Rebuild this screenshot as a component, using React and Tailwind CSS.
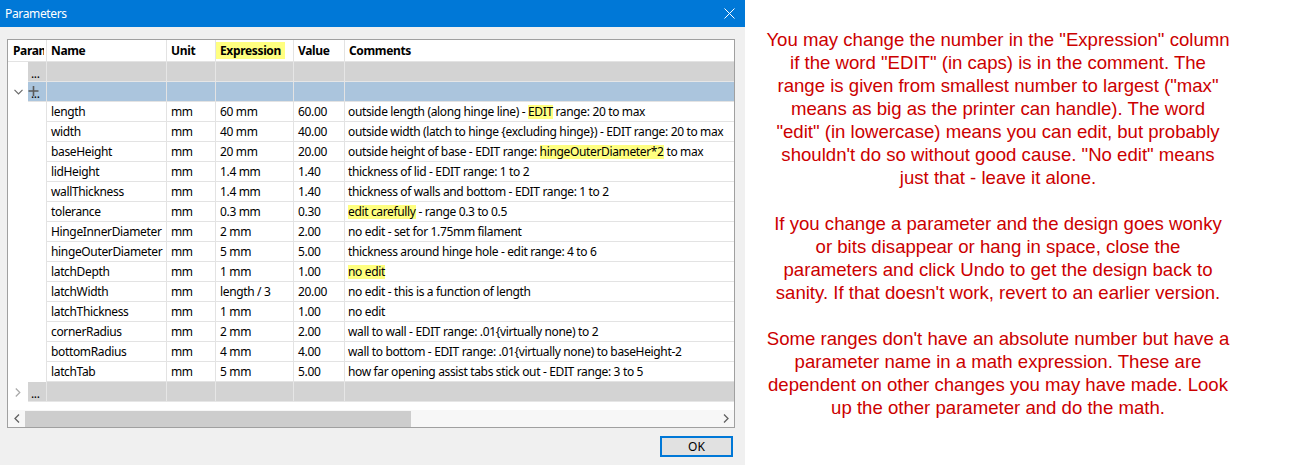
import React from "react";
import clsx from "clsx";

const hl = (t) => (
  <span className="bg-[#ffff80] leading-[14px] inline-block">{t}</span>
);

const rows = [
  ["length", "mm", "60 mm", "60.00", <>outside length (along hinge line) - {hl("EDIT")} range: 20 to max</>],
  ["width", "mm", "40 mm", "40.00", "outside width (latch to hinge {excluding hinge}) - EDIT range: 20 to max"],
  ["baseHeight", "mm", "20 mm", "20.00", <>outside height of base - EDIT range: {hl("hingeOuterDiameter*2")} to max</>],
  ["lidHeight", "mm", "1.4 mm", "1.40", "thickness of lid - EDIT range: 1 to 2"],
  ["wallThickness", "mm", "1.4 mm", "1.40", "thickness of walls and bottom - EDIT range: 1 to 2"],
  ["tolerance", "mm", "0.3 mm", "0.30", <>{hl("edit carefully")} - range 0.3 to 0.5</>],
  ["HingeInnerDiameter", "mm", "2 mm", "2.00", "no edit - set for 1.75mm filament"],
  ["hingeOuterDiameter", "mm", "5 mm", "5.00", "thickness around hinge hole - edit range: 4 to 6"],
  ["latchDepth", "mm", "1 mm", "1.00", hl("no edit")],
  ["latchWidth", "mm", "length / 3", "20.00", "no edit - this is a function of length"],
  ["latchThickness", "mm", "1 mm", "1.00", "no edit"],
  ["cornerRadius", "mm", "2 mm", "2.00", "wall to wall - EDIT range: .01{virtually none) to 2"],
  ["bottomRadius", "mm", "4 mm", "4.00", "wall to bottom - EDIT range: .01{virtually none) to baseHeight-2"],
  ["latchTab", "mm", "5 mm", "5.00", "how far opening assist tabs stick out - EDIT range: 3 to 5"],
];

const notes = [
  [
    'You may change the number in the "Expression" column',
    'if the word "EDIT" (in caps) is in the comment. The',
    'range is given from smallest number to largest ("max"',
    "means as big as the printer can handle). The word",
    '"edit" (in lowercase) means you can edit, but probably',
    "shouldn't do so without good cause. \"No edit\" means",
    "just that - leave it alone.",
  ],
  [
    "If you change a parameter and the design goes wonky",
    "or bits disappear or hang in space, close the",
    "parameters and click Undo to get the design back to",
    "sanity. If that doesn't work, revert to an earlier version.",
  ],
  [
    "Some ranges don't have an absolute number but have a",
    "parameter name in a math expression. These are",
    "dependent on other changes you may have made. Look",
    "up the other parameter and do the math.",
  ],
];

const colW = ["w-[120px]", "w-[49px]", "w-[78px]", "w-[51px]", "flex-1"];

const cell = "shrink-0 h-full border-r border-b border-[#e3e3e3] flex items-center overflow-hidden whitespace-nowrap";

const GroupRow = ({ blue, expander }) => (
  <div className="flex h-[20px]">
    <div className="w-[20px] shrink-0 flex items-center justify-center text-[#7a7a7a]">
      {expander}
    </div>
    <div
      className={clsx(
        "flex flex-1 h-full",
        blue ? "bg-[#abc5dd]" : "bg-[#d3d3d3]",
      )}
    >
      <div className={clsx(cell, "w-[19px] pl-[3px] items-end pb-[2px] relative", blue ? "border-[#c5d6e6]" : "border-[#e6e6e6]")}>
        <span className="leading-[10px]">...</span>
        {blue && (
          <svg className="absolute left-[0px] top-[3px]" width="11" height="12" viewBox="0 0 11 12">
            <path d="M5.5 1v10M0.5 6h10" stroke="#5a5a5a" strokeWidth="1.6" />
          </svg>
        )}
      </div>
      {colW.map((w, i) => (
        <div key={i} className={clsx(cell, w, blue ? "border-[#c5d6e6]" : "border-[#e6e6e6]", i === 4 && "border-r-0")} />
      ))}
    </div>
  </div>
);

export default function App() {
  return (
    <div className="flex w-[1294px] h-[465px] bg-white">
      {/* Dialog */}
      <div className="w-[745px] h-full bg-[#f0f0f0] flex flex-col font-['Noto_Sans',sans-serif] text-[12px] tracking-[-0.35px] text-black">
        <div className="h-[27px] bg-[#0078d7] flex items-center justify-between pl-[5px] pr-[10px]">
          <span className="text-white">Parameters</span>
          <svg width="11" height="11" viewBox="0 0 11 11">
            <path d="M0.5 0.5l10 10M10.5 0.5l-10 10" stroke="#fff" strokeWidth="1" />
          </svg>
        </div>

        <div className="mt-[12px] ml-[7px] w-[728px] h-[389px] border border-[#a0a0a0] bg-white flex flex-col">
          {/* header */}
          <div className="flex h-[22px] font-bold">
            <div className={clsx(cell, "w-[39px] pl-[5px]")}>
              <span className="w-[31px] overflow-hidden">Parameter</span>
            </div>
            {["Name", "Unit", "Expression", "Value", "Comments"].map((h, i) => (
              <div key={h} className={clsx(cell, colW[i], i === 4 && "border-r-0", i === 2 ? "pl-0" : "pl-[4px]")}>
                {i === 2 ? (
                  <span className="bg-[#ffff80] h-[17px] pl-[4px] pr-[4px] flex items-center">{h}</span>
                ) : (
                  h
                )}
              </div>
            ))}
          </div>

          <GroupRow />
          <GroupRow
            blue
            expander={
              <svg width="9" height="6" viewBox="0 0 9 6">
                <path d="M0.5 0.8l4 4 4-4" fill="none" stroke="#6a6a6a" strokeWidth="1.2" />
              </svg>
            }
          />

          {rows.map((r) => (
            <div key={r[0]} className="flex h-[20px]">
              <div className="w-[39px] shrink-0 border-r border-[#e3e3e3]" />
              {r.map((v, i) => (
                <div key={i} className={clsx(cell, colW[i], i === 4 ? "border-r-0 pl-[3px]" : "pl-[4px]")}>
                  <span>{v}</span>
                </div>
              ))}
            </div>
          ))}

          <GroupRow
            expander={
              <svg width="6" height="9" viewBox="0 0 6 9">
                <path d="M0.8 0.5l4 4-4 4" fill="none" stroke="#a8a8a8" strokeWidth="1.2" />
              </svg>
            }
          />

          <div className="flex-1" />

          {/* horizontal scrollbar */}
          <div className="h-[17px] flex items-stretch bg-[#f7f7f7]">
            <div className="w-[17px] flex items-center justify-center">
              <svg width="6" height="9" viewBox="0 0 6 9">
                <path d="M5 0.5l-4 4 4 4" fill="none" stroke="#606060" strokeWidth="1.3" />
              </svg>
            </div>
            <div className="flex-1 flex items-center">
              <div className="w-[386px] h-[16px] bg-[#cdcdcd]" />
            </div>
            <div className="w-[17px] flex items-center justify-center">
              <svg width="6" height="9" viewBox="0 0 6 9">
                <path d="M1 0.5l4 4-4 4" fill="none" stroke="#606060" strokeWidth="1.3" />
              </svg>
            </div>
          </div>
        </div>

        <div className="flex justify-end pr-[12px] mt-[8px]">
          <button className="w-[73px] h-[21px] border-2 border-[#0078d7] bg-[#e1e1e1] flex items-center justify-center tracking-normal">
            OK
          </button>
        </div>
      </div>

      {/* Instructions */}
      <div className="flex-1 pt-[28px] pl-[3px]">
        <div className="w-[500px] text-center text-[#cc0000] font-['Liberation_Sans',Arial,sans-serif] text-[18.6px] leading-[23px] flex flex-col gap-[23px] whitespace-nowrap">
          {notes.map((p, i) => (
            <p key={i}>
              {p.map((line, j) => (
                <React.Fragment key={j}>
                  {line}
                  {j < p.length - 1 && <br />}
                </React.Fragment>
              ))}
            </p>
          ))}
        </div>
      </div>
    </div>
  );
}
